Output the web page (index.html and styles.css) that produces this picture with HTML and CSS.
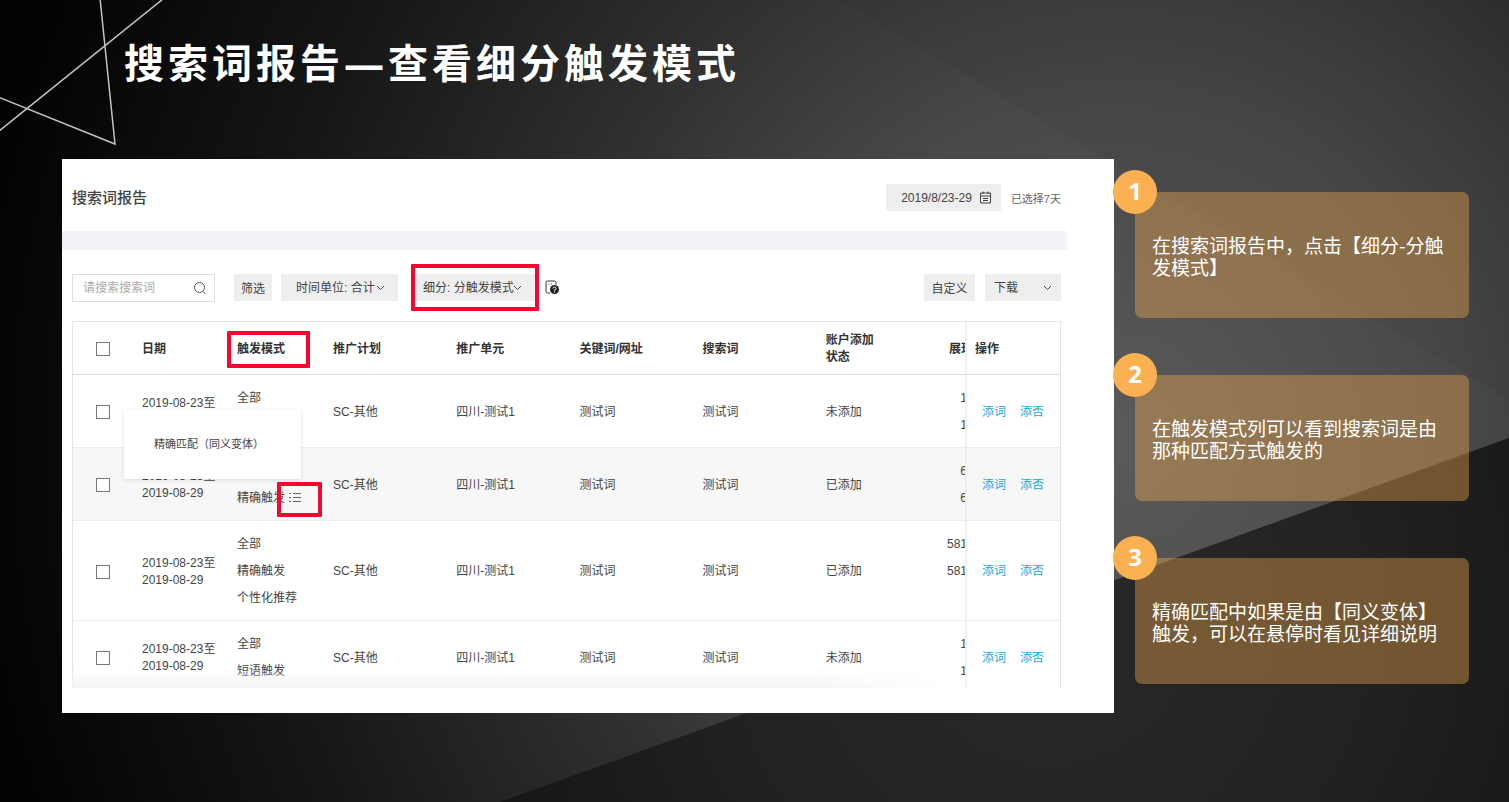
FILE: index.html
```html
<!DOCTYPE html>
<html lang="zh-CN">
<head>
    <meta charset="UTF-8">
    <meta name="viewport" content="width=device-width, initial-scale=1.0">
    <title>搜索词报告—查看细分触发模式</title>
    <link rel="stylesheet" href="styles.css">
</head>
<body>
    <svg class="backdrop" viewBox="0 0 1509 802" preserveAspectRatio="none" aria-hidden="true">
        <defs>
            <radialGradient id="glow" gradientUnits="userSpaceOnUse" cx="1120" cy="440" r="1150">
                <stop offset="0" stop-color="#5a5a5a"/>
                <stop offset="0.3" stop-color="#484848"/>
                <stop offset="0.5" stop-color="#303030"/>
                <stop offset="0.75" stop-color="#161616"/>
                <stop offset="1" stop-color="#030303"/>
            </radialGradient>
            <radialGradient id="floor" gradientUnits="userSpaceOnUse" cx="1050" cy="620" r="620">
                <stop offset="0" stop-color="#292929"/>
                <stop offset="0.5" stop-color="#222"/>
                <stop offset="1" stop-color="#141414"/>
            </radialGradient>
        </defs>
        <rect width="1509" height="802" fill="url(#glow)"/>
        <polygon points="840,0 1509,0 1509,400" fill="#000" opacity="0.03"/>
        <polygon points="500,802 1509,438 1509,802" fill="url(#floor)"/>
    </svg>
    <svg class="corner-lines" width="170" height="150" viewBox="0 0 170 150" aria-hidden="true">
        <path d="M100 -2L115 144L-2 97M163 -1L-1 131" fill="none" stroke="#c4c4c4" stroke-width="1.5"/>
    </svg>

    <h1 class="slide-title">搜索词报告—查看细分触发模式</h1>

    <div class="slide-body">
        <main class="panel">
            <div class="report-header">
                <h2>搜索词报告</h2>
                <div class="date-area">
                    <button type="button" class="btn date-btn">2019/8/23-29
                        <svg width="13" height="13" viewBox="0 0 13 13" fill="none" stroke="#444"><path d="M1.500 2h10v10h-10zM1.500 5h10M4 .5v2.500M9 .5v2.500M4 7.500h5M4 9.500h5"/></svg>
                    </button>
                    <span>已选择7天</span>
                </div>
            </div>
            <div class="band"></div>

            <div class="toolbar">
                <div class="search">
                    <input type="text" placeholder="请搜索搜索词" aria-label="请搜索搜索词">
                    <svg width="14" height="14" viewBox="0 0 14 14" fill="none" stroke="#555"><circle cx="6.500" cy="6.500" r="5"/><path d="M10 10.500l2.500 2.500"/></svg>
                </div>
                <button type="button" class="btn filter-btn">筛选</button>
                <div class="dropdown time-unit">
                    <select aria-label="时间单位"><option>时间单位: 合计</option></select>
                    <svg width="9" height="6" viewBox="0 0 9 6"><path d="M1 1l3.500 3.500L8 1"/></svg>
                </div>
                <div class="dropdown segment">
                    <select aria-label="细分"><option>细分: 分触发模式</option></select>
                    <svg width="9" height="6" viewBox="0 0 9 6"><path d="M1 1l3.500 3.500L8 1"/></svg>
                    <span class="mark"></span>
                </div>
                <svg class="help-icon" width="15" height="15" viewBox="0 0 15 15" aria-hidden="true">
                    <path d="M11 4.500V2.500a1.500 1.500 0 0 0-1.500-1.500h-7A1.500 1.500 0 0 0 1 2.500v9A1.500 1.500 0 0 0 2.500 13H5M3.500 4h1M6 4h1" fill="none" stroke="#333"/>
                    <circle cx="9.500" cy="9.500" r="4.500" fill="#222"/>
                    <path d="M8 8.500a1.500 1.500 0 1 1 1.500 1.500v.7M9.500 11.500v1" fill="none" stroke="#fff"/>
                </svg>
                <button type="button" class="btn custom-btn">自定义</button>
                <div class="dropdown download">
                    <select aria-label="下载"><option>下载</option></select>
                    <svg width="9" height="6" viewBox="0 0 9 6"><path d="M1 1l3.500 3.500L8 1"/></svg>
                </div>
            </div>

            <div class="table-view">
                <table>
                    <colgroup>
                        <col class="col-check"><col class="col-date"><col class="col-mode">
                        <col><col><col><col><col>
                        <col class="col-show"><col class="col-action">
                    </colgroup>
                    <thead>
                        <tr>
                            <th class="check"><input type="checkbox" aria-label="全选"></th>
                            <th>日期</th>
                            <th class="mode">触发模式<span class="mark"></span></th>
                            <th>推广计划</th>
                            <th>推广单元</th>
                            <th>关键词/网址</th>
                            <th>搜索词</th>
                            <th>账户添加<br>状态</th>
                            <th class="show-head">展现</th>
                            <th class="action">操作</th>
                        </tr>
                    </thead>
                    <tbody>
                        <tr>
                            <td class="check"><input type="checkbox" aria-label="选择第1行"></td>
                            <td>2019-08-23至<br>2019-08-29</td>
                            <td class="mode"><div>全部</div><div>精确触发</div></td>
                            <td>SC-其他</td>
                            <td>四川-测试1</td>
                            <td>测试词</td>
                            <td>测试词</td>
                            <td>未添加</td>
                            <td class="show"><div>1</div><div>1</div></td>
                            <td class="action"><a href="#">添词</a><a href="#">添否</a></td>
                        </tr>
                        <tr class="hovered">
                            <td class="check"><input type="checkbox" aria-label="选择第2行"></td>
                            <td>2019-08-23至<br>2019-08-29</td>
                            <td class="mode">
                                <div>全部</div>
                                <div>精确触发<span class="detail"><svg width="12" height="10" viewBox="0 0 12 10" stroke="#666"><path d="M0 1.500h2M4 1.500h8M0 5.500h2M4 5.500h8M0 9.500h2M4 9.500h8"/></svg><span class="mark"></span></span></div>
                                <div class="tooltip">精确匹配（同义变体）</div>
                            </td>
                            <td>SC-其他</td>
                            <td>四川-测试1</td>
                            <td>测试词</td>
                            <td>测试词</td>
                            <td>已添加</td>
                            <td class="show"><div>6</div><div>6</div></td>
                            <td class="action"><a href="#">添词</a><a href="#">添否</a></td>
                        </tr>
                        <tr class="tall">
                            <td class="check"><input type="checkbox" aria-label="选择第3行"></td>
                            <td>2019-08-23至<br>2019-08-29</td>
                            <td class="mode"><div>全部</div><div>精确触发</div><div>个性化推荐</div></td>
                            <td>SC-其他</td>
                            <td>四川-测试1</td>
                            <td>测试词</td>
                            <td>测试词</td>
                            <td>已添加</td>
                            <td class="show"><div>581</div><div>581</div><div>&nbsp;</div></td>
                            <td class="action"><a href="#">添词</a><a href="#">添否</a></td>
                        </tr>
                        <tr>
                            <td class="check"><input type="checkbox" aria-label="选择第4行"></td>
                            <td>2019-08-23至<br>2019-08-29</td>
                            <td class="mode"><div>全部</div><div>短语触发</div></td>
                            <td>SC-其他</td>
                            <td>四川-测试1</td>
                            <td>测试词</td>
                            <td>测试词</td>
                            <td>未添加</td>
                            <td class="show"><div>1</div><div>1</div></td>
                            <td class="action"><a href="#">添词</a><a href="#">添否</a></td>
                        </tr>
                    </tbody>
                </table>
                <div class="fade"></div>
            </div>
        </main>

        <aside class="notes">
            <section class="note"><span class="badge">1</span><p>在搜索词报告中，点击【细分-分触发模式】</p></section>
            <section class="note"><span class="badge">2</span><p>在触发模式列可以看到搜索词是由那种匹配方式触发的</p></section>
            <section class="note"><span class="badge">3</span><p>精确匹配中如果是由【同义变体】触发，可以在悬停时看见详细说明</p></section>
        </aside>
    </div>
</body>
</html>
```
FILE: styles.css
```css
* {
    box-sizing: border-box;
}
body {
    margin: 0;
    min-height: 100vh;
    background-color: #1a1a1a;
    color: #444;
    font-family: "Liberation Sans", "Noto Sans CJK SC", sans-serif;
    font-size: 12px;
    position: relative;
}
.backdrop {
    position: absolute;
    top: 0;
    left: 0;
    width: 100%;
    height: 100%;
    z-index: -1;
}
.corner-lines {
    position: absolute;
    top: 0;
    left: 0;
    z-index: -1;
}
.slide-title {
    margin: 0;
    padding: 34px 40px 67px 124px;
    color: #fff;
    font-family: "Open Sans", "Noto Sans CJK SC", sans-serif;
    font-size: 40px;
    line-height: 58px;
    letter-spacing: 4px;
}
.slide-body {
    display: grid;
    grid-template-columns: minmax(0, 1fr) 334px;
    gap: 21px;
    padding: 0 40px 40px 62px;
    align-items: start;
}
.panel {
    background-color: #fff;
    padding: 0 47px 25px 0;
}

/* report header */
.report-header {
    display: flex;
    justify-content: space-between;
    align-items: center;
    height: 72px;
    padding: 5px 6px 0 10px;
}
.report-header h2 {
    margin: 0;
    padding-bottom: 3px;
    color: #444;
    font-size: 15px;
    font-weight: 500;
}
.date-area {
    display: flex;
    align-items: center;
    gap: 10px;
    color: #666;
    font-size: 11px;
}
.btn {
    height: 27px;
    padding: 0;
    border: none;
    background-color: #eee;
    color: #444;
    font-family: inherit;
    font-size: 12px;
    cursor: pointer;
}
.date-btn {
    display: flex;
    align-items: center;
    justify-content: flex-end;
    gap: 7px;
    width: 115px;
    padding-right: 9px;
}
.band {
    height: 19px;
    background-color: #f2f3f8;
}

/* toolbar */
.toolbar {
    display: flex;
    align-items: center;
    height: 71px;
    padding: 4px 6px 0 10px;
}
.search {
    position: relative;
    width: 143px;
    margin-right: 19px;
}
.search input {
    display: block;
    width: 100%;
    height: 28px;
    padding: 0 30px 0 10px;
    border: 1px solid #ddd;
    background-color: #fff;
    font: inherit;
}
.search input::placeholder {
    color: #aaa;
}
.search svg {
    position: absolute;
    top: 7px;
    right: 8px;
}
.filter-btn {
    width: 38px;
    margin-right: 9px;
}
.dropdown {
    position: relative;
}
.dropdown select {
    display: block;
    width: 100%;
    height: 27px;
    padding: 0 0 0 15px;
    border: none;
    border-radius: 0;
    appearance: none;
    background-color: #eee;
    color: #444;
    font: inherit;
}
.dropdown > svg {
    position: absolute;
    top: 11px;
    right: 13px;
    fill: none;
    stroke: #444;
    pointer-events: none;
}
.time-unit {
    width: 117px;
    margin-right: 17px;
}
.segment {
    width: 120px;
    margin-right: 10px;
}
.segment select {
    padding-left: 8px;
}
.custom-btn {
    width: 51px;
    margin: 0 10px 0 auto;
}
.download {
    width: 76px;
}
.download select {
    padding-left: 9px;
}
.download > svg {
    right: 9px;
}

/* red frames */
.mark {
    position: absolute;
    border: 4px solid #f5062f;
    border-radius: 1px;
    pointer-events: none;
}
.segment .mark {
    inset: -10px -4px;
}
th .mark {
    inset: 9px 13px 6px 0;
}
.detail .mark {
    inset: -10px -21px -15px -12px;
}

/* table */
.table-view {
    position: relative;
    height: 367px;
    margin: 0 6px 0 10px;
    overflow: hidden;
}
table {
    width: 100%;
    table-layout: fixed;
    border-collapse: separate;
    border-spacing: 0;
    border: 1px solid #e4e4e4;
}
.col-check {
    width: 59px;
}
.col-date {
    width: 95px;
}
.col-mode {
    width: 96px;
}
.col-show {
    width: 26px;
}
.col-action {
    width: 95px;
}
th, td {
    height: 73px;
    padding: 2px 0 0 10px;
    border-bottom: 1px solid #ececec;
    text-align: left;
    line-height: 17px;
    white-space: nowrap;
}
th {
    height: 53px;
    border-color: #ddd;
    color: #333;
}
.check {
    padding-left: 23px;
}
.check input {
    display: block;
    width: 14px;
    height: 14px;
    margin: 0;
    border: 1px solid #777;
    appearance: none;
    background-color: #fff;
}
.mode {
    position: relative;
}
.mode div, .show div {
    line-height: 27px;
}
.tall td {
    height: 100px;
}
.hovered td {
    background-color: #f7f7f7;
}
.show, .show-head {
    overflow: hidden;
    text-overflow: clip;
}
.show {
    padding-left: 0;
}
.show div {
    margin-right: -2px;
    text-align: right;
}
.action {
    padding-left: 15px;
    border-left: 2px solid #f0f0f0;
}
th.action {
    padding-left: 8px;
}
.action a {
    margin-right: 14px;
    color: #1ba5dc;
    text-decoration: none;
}
.action a:last-child {
    margin-right: 0;
}
.detail {
    position: relative;
    display: inline-block;
    height: 10px;
    margin-left: 4px;
    line-height: 10px;
}
.detail svg {
    display: block;
}
.mode .tooltip {
    position: absolute;
    left: -103px;
    bottom: 41px;
    z-index: 1;
    width: 177px;
    padding-left: 30px;
    background-color: #fff;
    box-shadow: 0 1px 4px rgba(0, 0, 0, 0.12);
    font-size: 11px;
    line-height: 69px;
}
.fade {
    position: absolute;
    left: 0;
    right: 120px;
    bottom: 0;
    height: 18px;
    background: linear-gradient(rgba(255, 255, 255, 0), #f4f4f4);
    mask-image: linear-gradient(to right, #000 85%, transparent);
}

/* notes */
.notes {
    display: flex;
    flex-direction: column;
    gap: 57px;
    padding-top: 33px;
}
.note {
    position: relative;
    display: flex;
    align-items: center;
    min-height: 126px;
    padding: 2px 17px 0;
    border-radius: 7px;
    background-color: rgba(251, 176, 80, 0.38);
    color: #fff;
    font-family: "Noto Sans CJK SC", sans-serif;
    font-size: 19px;
    line-height: 22px;
}
.note p {
    margin: 0;
}
.badge {
    position: absolute;
    top: -22px;
    left: -22px;
    width: 44px;
    height: 44px;
    border-radius: 50%;
    background-color: #fbb152;
    font-family: "Open Sans", sans-serif;
    font-size: 24px;
    font-weight: bold;
    line-height: 42px;
    text-align: center;
}
```
